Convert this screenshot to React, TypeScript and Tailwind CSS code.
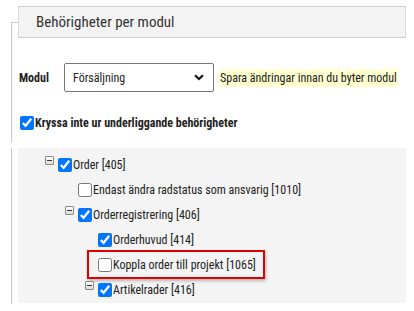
import { ReactNode } from "react"

const font = { fontFamily: '"Roboto Condensed", Roboto, "Liberation Sans", sans-serif' }

function Minus() {
  return (
    <span className="inline-flex items-center justify-center w-[9px] h-[9px] border border-[#8a8a8a] bg-gradient-to-b from-white to-[#dcdcdc] rounded-[1px] self-start -mt-[2px]">
      <span className="block w-[5px] h-[1px] bg-[#333]" />
    </span>
  )
}

function Check({ checked }: { checked?: boolean }) {
  return (
    <input
      type="checkbox"
      defaultChecked={checked}
      className="m-0 w-[14px] h-[14px] shrink-0"
    />
  )
}

interface RowProps {
  level: number
  label: string
  checked?: boolean
  toggle?: boolean
  boxed?: boolean
}

const indent: Record<number, string> = {
  1: "pl-[27px]",
  2: "pl-[47px]",
  3: "pl-[67px]",
}

function TreeRow({ level, label, checked, toggle, boxed }: RowProps) {
  const inner: ReactNode = (
    <span className="flex items-center">
      <Check checked={checked} />
      <span className="ml-[1px] text-[12px] text-[#222] leading-none">{label}</span>
    </span>
  )
  return (
    <div className={`h-[25px] flex items-center ${indent[level]}`}>
      <span className="w-[13px] h-[14px] flex">{toggle && <Minus />}</span>
      {boxed ? (
        <span className="-ml-[11px] h-[29px] flex items-center pl-[9px] pr-[7px] border-2 border-[#e30000] shadow-[1px_2px_3px_rgba(0,0,0,0.25)]">
          {inner}
        </span>
      ) : (
        inner
      )}
    </div>
  )
}

export default function App() {
  return (
    <div className="w-[414px] h-[311px] bg-white overflow-hidden pt-[22px]" style={font}>
      {/* modul section */}
      <div className="ml-[11px] w-[395px] h-[121px] border-l border-t border-[#c9c9c9]">
        <div className="-mt-[17px] ml-[6px] h-[32px] bg-[#f3f3f3] border border-[#dadada] border-t-[#cfcfcf] border-b-[#cfcfcf] flex items-center pl-[17px]">
          <span className="text-[15px] text-[#333]">Behörigheter per modul</span>
        </div>

        <div className="flex items-center mt-[25px] h-[29px] pl-[7px]">
          <span className="text-[12px] font-bold text-[#222] w-[45px]">Modul</span>
          <div className="w-[150px] h-[29px] border border-[#767676] rounded-[2px] flex items-center justify-between pl-[8px] pr-[9px] bg-white">
            <span className="text-[12px] text-[#222]">Försäljning</span>
            <svg width="10" height="7" viewBox="0 0 10 7">
              <path d="M1 1.2 L5 5 L9 1.2" fill="none" stroke="#111" strokeWidth="2.2" />
            </svg>
          </div>
          <span className="ml-[5px] bg-[#ffffd0] text-[12px] text-[#222] px-[1px] leading-[18px] whitespace-nowrap">
            Spara ändringar innan du byter modul
          </span>
        </div>

        <div className="flex items-center mt-[22px] pl-[8px]">
          <Check checked />
          <span className="ml-[1px] text-[12px] font-bold text-[#222]">
            Kryssa inte ur underliggande behörigheter
          </span>
        </div>
      </div>

      {/* tree section */}
      <div className="ml-[11px] mt-[5px] w-[395px] h-[156px] border-l border-[#c9c9c9]">
        <div className="ml-[6px] h-[155px] bg-[#f4f4f4] pt-[4px]">
          <TreeRow level={1} toggle checked label="Order [405]" />
          <TreeRow level={2} label="Endast ändra radstatus som ansvarig [1010]" />
          <TreeRow level={2} toggle checked label="Orderregistrering [406]" />
          <TreeRow level={3} checked label="Orderhuvud [414]" />
          <TreeRow level={3} boxed label="Koppla order till projekt [1065]" />
          <TreeRow level={3} toggle checked label="Artikelrader [416]" />
        </div>
      </div>
    </div>
  )
}
